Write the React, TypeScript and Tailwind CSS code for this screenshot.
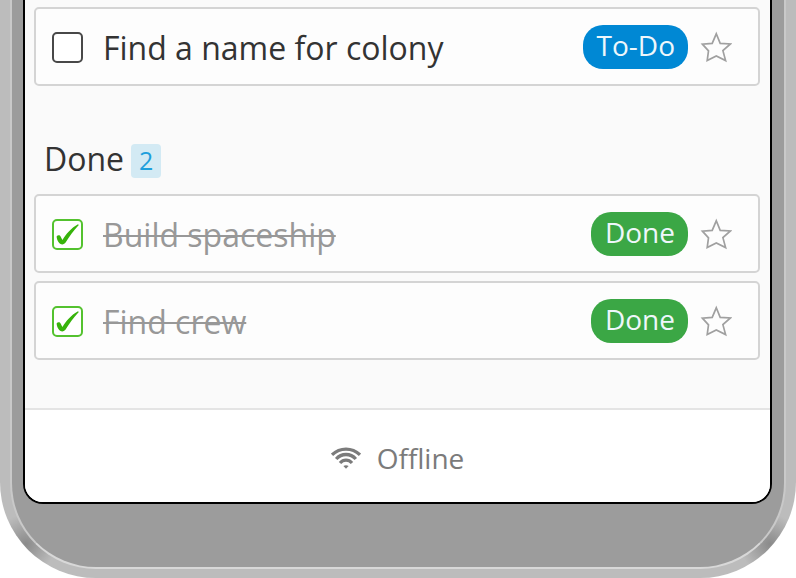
import { useState } from 'react'

type Status = 'To-Do' | 'Done'

interface Task {
  id: number
  title: string
  status: Status
}

const initialTasks: Task[] = [
  { id: 1, title: 'Find a name for colony', status: 'To-Do' },
  { id: 2, title: 'Build spaceship', status: 'Done' },
  { id: 3, title: 'Find crew', status: 'Done' },
]

function StarIcon() {
  return (
    <svg viewBox="0 0 32 32" className="size-8" fill="none" stroke="#a0a0a0" strokeWidth="1.7">
      <path d="M16.3 2.8 L20.2 12.4 L30.4 13 L22.9 19.6 L25.6 29.6 L16.3 25 L7.2 29.6 L8.5 19.8 L2.4 13.2 L12.2 12.4 Z" />
    </svg>
  )
}

function CheckIcon() {
  return (
    <svg viewBox="0 0 31 31" className="pointer-events-none col-start-1 row-start-1 size-[31px]" fill="#37b30b">
      <path d="M4.6 17.4 C5.6 15.8 8 15.9 8.6 17.5 L10.4 21 C14 14.8 19.5 8.8 26 5.2 L26.8 6 C21.6 11.4 17.4 17.2 13.6 23.6 C12.2 25.8 8.8 26 7.2 24 C5.6 22 4.8 19.8 4.6 17.4 Z" />
    </svg>
  )
}

function WifiIcon() {
  return (
    <svg viewBox="0 0 30 22" className="h-[22px] w-[30px]" fill="none" stroke="#7b7b7b" strokeWidth="3.3">
      <path d="M1 7.8 C9 0.2 21 0.2 29 7.8" />
      <path d="M5.2 12 C10.5 6 19.5 6 24.8 12" />
      <path d="M9 16 C12.4 12.2 17.6 12.2 21 16" />
      <path d="M12.4 18.9 Q15 17.4 17.6 18.9 L15 21.8 Z" fill="#7b7b7b" stroke="none" />
    </svg>
  )
}

function TaskRow({ task, onToggle }: { task: Task; onToggle: () => void }) {
  const done = task.status === 'Done'
  const id = `task-${task.id}`

  return (
    <li className="flex h-[79px] items-center rounded-[5px] border-2 border-[#d4d4d4] bg-[#fdfdfd] pr-[26px] pl-4">
      <span className="mt-0.5 grid shrink-0">
        <input
          id={id}
          type="checkbox"
          checked={done}
          onChange={onToggle}
          className="col-start-1 row-start-1 size-[31px] appearance-none rounded-[5px] border-2 border-[#484848] bg-white checked:border-[#54c22f]"
        />
        {done && <CheckIcon />}
      </span>
      <label
        htmlFor={id}
        className={`mt-0.5 ml-5 flex-1 text-[32px] leading-10 ${done ? 'text-[#989898] line-through decoration-2' : 'text-[#333333]'}`}
      >
        {task.title}
      </label>
      <span
        className={`flex h-11 items-center rounded-[20px] pr-[13px] pl-[14px] pb-1 text-[28px] leading-8 text-[#eef7fb] ${done ? 'bg-[#3ba745]' : 'bg-[#0088d4]'}`}
      >
        {task.status}
      </span>
      <button type="button" aria-label={`Star ${task.title}`} className="ml-3">
        <StarIcon />
      </button>
    </li>
  )
}

export default function App() {
  const [tasks, setTasks] = useState(initialTasks)
  const todo = tasks.filter((t) => t.status === 'To-Do')
  const done = tasks.filter((t) => t.status === 'Done')

  const toggle = (id: number) => {
    setTasks(tasks.map((t) => (t.id === id ? { ...t, status: t.status === 'Done' ? 'To-Do' : 'Done' } : t)))
  }

  return (
    <div className="min-h-screen bg-white font-['Open_Sans',sans-serif]">
      {/* phone body */}
      <div className="rounded-b-[96px] bg-[#bcbcbc] bg-[radial-gradient(circle_at_26px_calc(100%_-_34px),#8a8a8a,transparent_30px),radial-gradient(circle_at_calc(100%_-_26px)_calc(100%_-_34px),#8a8a8a,transparent_30px)] px-[10px] pb-[9px]">
        <div className="rounded-b-[86px] border-x-2 border-b-2 border-x-[#c9c9c9] border-b-[#d8d8d8] bg-[#9c9c9c] pr-3 pl-[11px] pb-[63px]">
          <div className="overflow-hidden rounded-b-[20px] border-x-2 border-b-2 border-black bg-[#fafafa]">
            <main className="pr-[10px] pl-[9px] pt-[7px] pb-12">
              <ul className="flex flex-col gap-2">
                {todo.map((t) => (
                  <TaskRow key={t.id} task={t} onToggle={() => toggle(t.id)} />
                ))}
              </ul>
              <div className="flex items-center gap-[7px] pt-[51px] pb-[13px] pl-[10px]">
                <h2 className="text-[32px] leading-[44px] text-[#333333]">Done</h2>
                <span className="mt-1 flex h-[34px] w-[30px] items-center justify-center rounded-[4px] bg-[#d3eaf4] text-[25px] text-[#1e9fdc]">
                  {done.length}
                </span>
              </div>
              <ul className="flex flex-col gap-2">
                {done.map((t) => (
                  <TaskRow key={t.id} task={t} onToggle={() => toggle(t.id)} />
                ))}
              </ul>
            </main>
            <footer className="flex h-[94px] items-center justify-center gap-4 border-t-2 border-[#e4e4e4] bg-white pt-[3px] text-[28px] text-[#7b7b7b]">
              <WifiIcon />
              <span>Offline</span>
            </footer>
          </div>
        </div>
      </div>
    </div>
  )
}
